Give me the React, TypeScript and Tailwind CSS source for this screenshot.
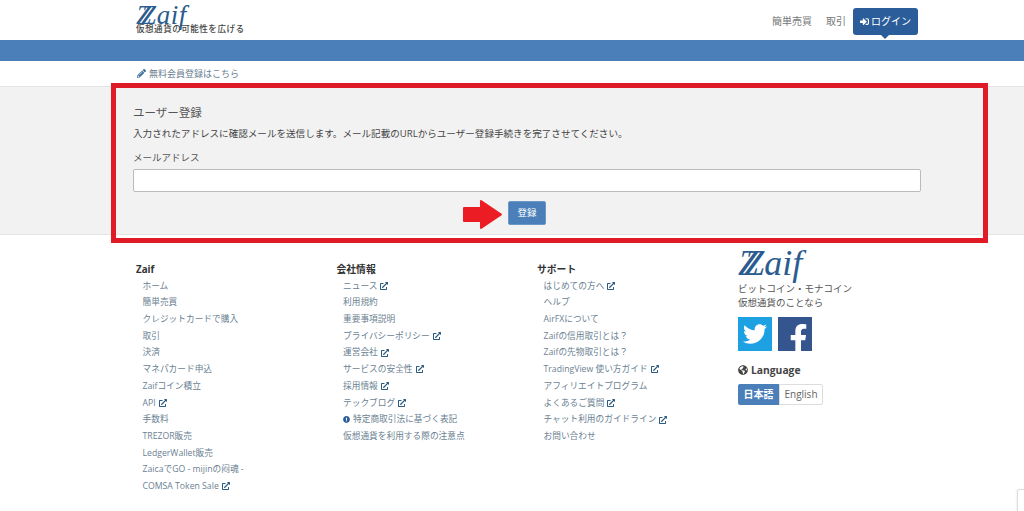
import { FaExclamationCircle, FaExternalLinkAlt, FaFacebookF, FaGlobeAmericas, FaPencilAlt, FaSignInAlt, FaTwitter } from "react-icons/fa"

interface FooterLink {
  label: string
  external?: boolean
  notice?: boolean
}

interface FooterColumn {
  title: string
  links: FooterLink[]
}

const columns: FooterColumn[] = [
  {
    title: "Zaif",
    links: [
      { label: "ホーム" },
      { label: "簡単売買" },
      { label: "クレジットカードで購入" },
      { label: "取引" },
      { label: "決済" },
      { label: "マネパカード申込" },
      { label: "Zaifコイン積立" },
      { label: "API", external: true },
      { label: "手数料" },
      { label: "TREZOR販売" },
      { label: "LedgerWallet販売" },
      { label: "ZaicaでGO - mijinの闷魂 -" },
      { label: "COMSA Token Sale", external: true },
    ],
  },
  {
    title: "会社情報",
    links: [
      { label: "ニュース", external: true },
      { label: "利用規約" },
      { label: "重要事項説明" },
      { label: "プライバシーポリシー", external: true },
      { label: "運営会社", external: true },
      { label: "サービスの安全性", external: true },
      { label: "採用情報", external: true },
      { label: "テックブログ", external: true },
      { label: "特定商取引法に基づく表記", notice: true },
      { label: "仮想通貨を利用する際の注意点" },
    ],
  },
  {
    title: "サポート",
    links: [
      { label: "はじめての方へ", external: true },
      { label: "ヘルプ" },
      { label: "AirFXについて" },
      { label: "Zaifの信用取引とは？" },
      { label: "Zaifの先物取引とは？" },
      { label: "TradingView 使い方ガイド", external: true },
      { label: "アフィリエイトプログラム" },
      { label: "よくあるご質問", external: true },
      { label: "チャット利用のガイドライン", external: true },
      { label: "お問い合わせ" },
    ],
  },
]

function Logo({ big }: { big?: boolean }) {
  return (
    <div
      className={`font-['Liberation_Serif',serif] italic text-[#2b5c90] ${
        big ? "text-[36px] leading-[30px]" : "text-[27px] leading-[24px] tracking-[0.6px]"
      }`}
    >
      <span className={big ? "tracking-[-13.7px]" : "tracking-[-10px]"}>Z</span>
      <span>Zaif</span>
    </div>
  )
}

export default function App() {
  return (
    <div className="relative h-[511px] overflow-hidden bg-white font-['Open_Sans','Noto_Sans_CJK_JP',sans-serif] text-[10px] text-[#555]">
      <header className="h-10 flex justify-between pl-[136px] pr-[106px]">
        <div className="pt-[3px]">
          <Logo />
          <div className="text-[8.6px] leading-[10px] mt-[-3px] font-medium tracking-[0.45px] text-[#444]">
            仮想通貨の可能性を広げる
          </div>
        </div>
        <nav className="flex items-start pt-2">
          <a className="mt-[7px] leading-[13px] text-[#777]">簡単売買</a>
          <a className="mt-[7px] ml-[14px] leading-[13px] text-[#777]">取引</a>
          <a className="relative ml-[7px] w-[65px] h-[27px] rounded-[3px] bg-[#2a5d99] text-white flex items-center justify-center gap-[2px]">
            <FaSignInAlt className="text-[9px]" />
            ログイン
            <span className="absolute left-[28px] top-[27px] border-x-[4px] border-t-[4px] border-x-transparent border-t-[#2a5d99]" />
          </a>
        </nav>
      </header>

      <div className="h-[21px] bg-[#4a7fb9]" />

      <div className="h-[25px] pl-[137px] flex items-center gap-[3px] text-[#6b7f92] text-[9px]">
        <FaPencilAlt className="text-[9px] text-[#3f6d99]" />
        無料会員登録はこちら
      </div>

      <section className="h-[149px] bg-[#f2f2f2] border-y border-[#e4e4e4] pl-[133px] pr-[103px] pt-[17px]">
        <h2 className="text-[11.5px] leading-[18px] text-[#555]">ユーザー登録</h2>
        <p className="mt-[5px] text-[9.57px] leading-[14px] text-[#444]">
          入力されたアドレスに確認メールを送信します。メール記載のURLからユーザー登録手続きを完了させてください。
        </p>
        <label className="block mt-[10px] text-[9.5px] leading-[14px] text-[#555]">メールアドレス</label>
        <input
          type="text"
          className="block mt-[4px] w-full h-[23px] bg-white border border-[#bbb] rounded-[2px]"
        />
        <div className="flex justify-center mt-[9px]">
          <button className="w-[38px] h-[24px] rounded-[2px] bg-[#4a7fb9] border border-[#6a97c6] text-white text-[9.5px]">
            登録
          </button>
        </div>
      </section>

      <footer className="grid grid-cols-[200.5px_200.5px_201px_1fr] pl-[136px] pt-[27px]">
        {columns.map((col) => (
          <div key={col.title}>
            <h3 className="text-[9.8px] leading-[15.5px] font-bold text-[#333]">{col.title}</h3>
            <ul className="pl-[6.5px] text-[8.7px] text-[#6b7f92]">
              {col.links.map((link) => (
                <li key={link.label} className="h-[16.72px] leading-[16.72px] flex items-center whitespace-nowrap">
                  {link.notice && <FaExclamationCircle className="mr-[3px] text-[7px] text-[#2a5d99]" />}
                  {link.label}
                  {link.external && <FaExternalLinkAlt className="ml-[3px] text-[8px] text-[#2b5a80]" />}
                </li>
              ))}
            </ul>
          </div>
        ))}
        <div className="-mt-[14px]">
          <Logo big />
          <p className="mt-[4px] text-[9.5px] leading-[14px] text-[#555]">
            ビットコイン・モナコイン
            <br />
            仮想通貨のことなら
          </p>
          <div className="flex gap-[6px] mt-[7px]">
            <div className="w-[34px] h-[34px] bg-[#1da1e2] flex items-center justify-center text-white text-[24px]">
              <FaTwitter />
            </div>
            <div className="w-[34px] h-[34px] bg-[#35558f] flex items-end justify-center text-white text-[29px] overflow-hidden">
              <FaFacebookF className="translate-x-[3px] translate-y-[2px]" />
            </div>
          </div>
          <div className="mt-[11px] flex items-center gap-[3px] text-[10.3px] leading-[16px] font-bold text-[#444]">
            <FaGlobeAmericas className="text-[10px]" />
            Language
          </div>
          <div className="mt-[6px] flex w-[85px] h-[21px] text-[10px]">
            <span className="w-[41px] bg-[#4a7fb9] text-white font-bold flex items-center justify-center rounded-l-[2px]">
              日本語
            </span>
            <span className="w-[44px] border border-[#ddd] text-[#666] flex items-center justify-center rounded-r-[2px]">
              English
            </span>
          </div>
        </div>
      </footer>

      {/* annotations on top of the screenshot */}
      <div className="absolute left-[111px] top-[83px] w-[877px] h-[160px] border-[5px] border-[#e01b28] pointer-events-none" />
      <svg className="absolute left-[461px] top-[199px]" width="42" height="31" viewBox="0 0 42 31">
        <path
          d="M3 9 H20 V2 L40 15.5 L20 29 V22 H3 V9 Z"
          fill="#ec1c24"
          stroke="#ec1c24"
          strokeWidth="2"
          strokeLinejoin="round"
        />
      </svg>
      <div className="absolute left-[1017px] top-[489px] w-[20px] h-[30px] bg-white border border-[#ddd] rounded-[2px] shadow-sm" />
    </div>
  )
}
